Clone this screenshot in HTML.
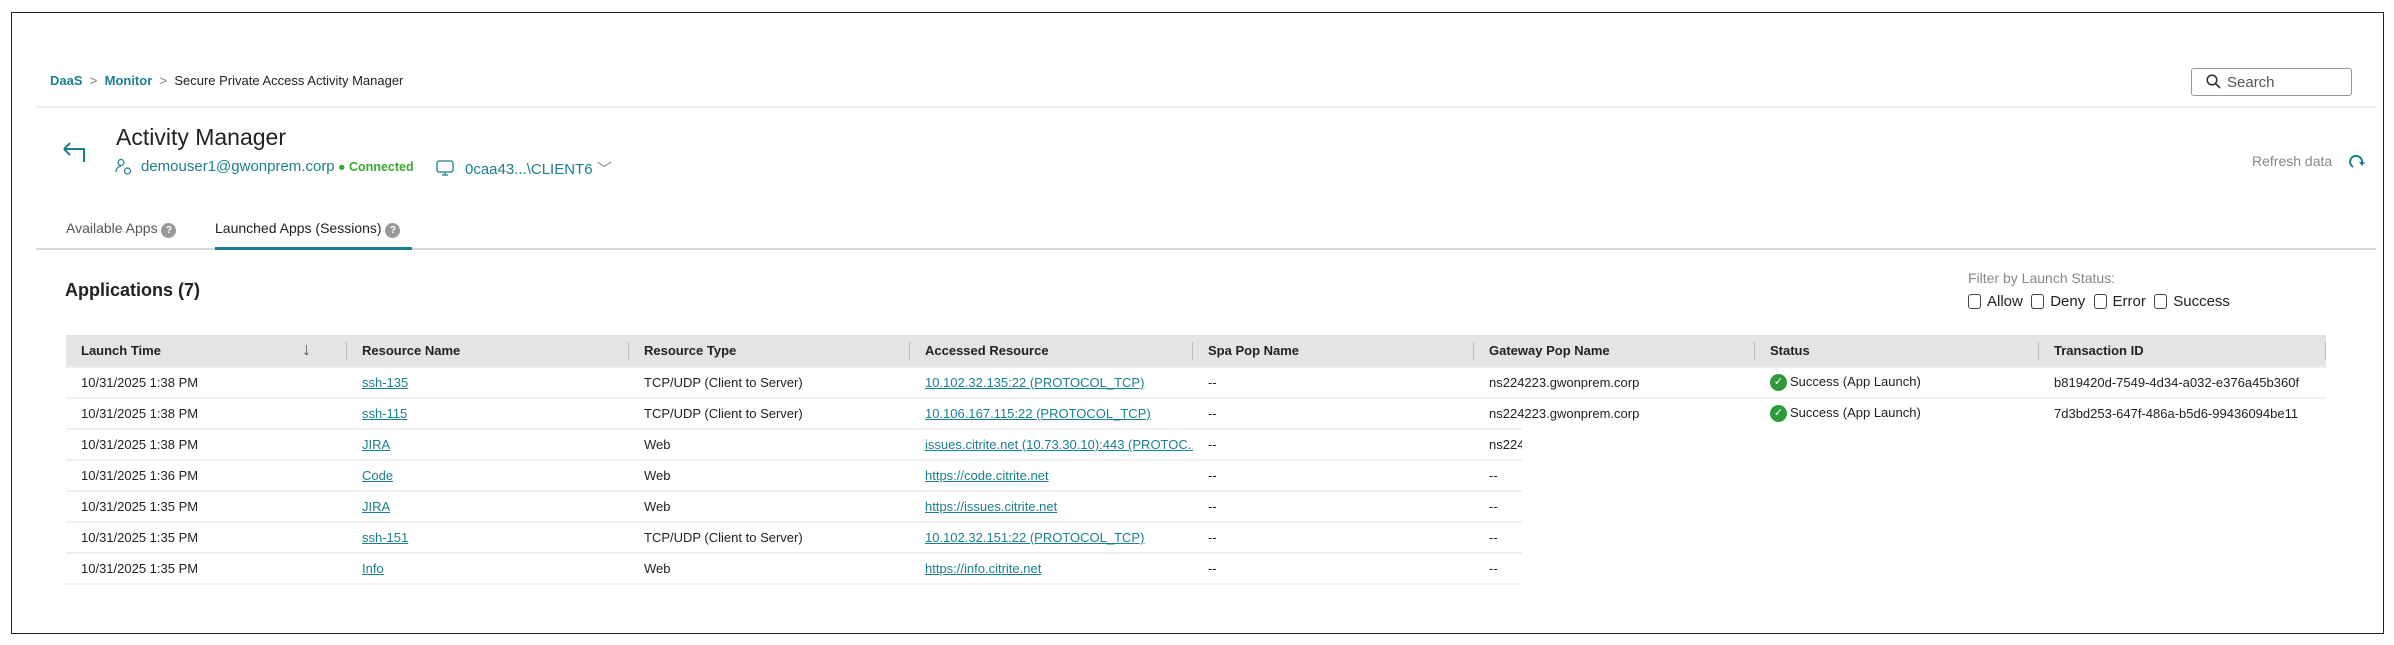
<!DOCTYPE html>
<html><head><meta charset="utf-8"><style>
*{margin:0;padding:0;box-sizing:border-box}
body{width:2394px;height:645px;background:#fff;font-family:"Liberation Sans",sans-serif;color:#222;position:relative;overflow:hidden}
.a{position:absolute;white-space:nowrap}
.frame{position:absolute;left:11px;top:12px;width:2373px;height:622px;border:1.5px solid #222}
.teal{color:#1a7f8e}
.hr{position:absolute;height:2px;background:#e6e6e6}
table{position:absolute;left:66px;top:335px;border-collapse:collapse;font-size:13px;table-layout:fixed;width:2260px}
td,th{height:31px;padding:0 0 0 15px;text-align:left;white-space:nowrap;overflow:hidden;border-bottom:2px solid #f0f0f0;vertical-align:middle}
th{height:32px;background:#e4e4e4;font-weight:bold;position:relative}
th .s{position:absolute;right:0;top:7px;width:1px;height:18px;background:#bbb}
td a{color:#1a7f8e;text-decoration:underline}
.ok{display:inline-block;width:17px;height:17px;border-radius:50%;background:#2e9a3a;color:#fff;font-size:11px;text-align:center;line-height:17px;vertical-align:middle;margin-right:3px}
.cb{display:inline-block;width:13px;height:15px;border:1.5px solid #444;border-radius:3px;vertical-align:-3px;margin-right:6px}
</style></head><body>
<div class="frame"></div>
<div class="hr" style="left:36px;top:106px;width:2340px;background:#ececec"></div>
<div class="a" style="left:50px;top:73px;font-size:13px"><span class="teal" style="font-weight:bold">DaaS</span> <span style="color:#777">&nbsp;&gt;&nbsp;</span> <span class="teal" style="font-weight:bold">Monitor</span> <span style="color:#777">&nbsp;&gt;&nbsp;</span> Secure Private Access Activity Manager</div>
<div class="a" style="left:2191px;top:68px;width:161px;height:28px;border:1.5px solid #999;border-radius:3px;font-size:15px;color:#555;padding:5px 0 0 14px"><svg width="15" height="15" viewBox="0 0 15 15" style="vertical-align:-2px;margin-right:6px"><circle cx="6" cy="6" r="4.8" fill="none" stroke="#333" stroke-width="1.6"/><path d="M9.5 9.5L14 14" stroke="#333" stroke-width="1.6"/></svg>Search</div>
<svg class="a" style="left:62px;top:142px" width="28" height="22" viewBox="0 0 28 22"><path d="M2 7H22V20M2 7L8 1M2 7L8 13" fill="none" stroke="#1a7f8e" stroke-width="2"/></svg>
<div class="a" style="left:116px;top:124px;font-size:23px;color:#222">Activity Manager</div>
<svg class="a" style="left:115px;top:158px" width="18" height="18" viewBox="0 0 18 18"><circle cx="6" cy="4.5" r="3" fill="none" stroke="#1a7f8e" stroke-width="1.2"/><path d="M1 14c0-4 3-6 5-6" fill="none" stroke="#1a7f8e" stroke-width="1.2"/><circle cx="12.5" cy="13" r="3" fill="none" stroke="#1a7f8e" stroke-width="1.2"/></svg>
<div class="a teal" style="left:141px;top:158px;font-size:15px">demouser1@gwonprem.corp</div>
<div class="a" style="left:338px;top:160px;font-size:12.5px;color:#3aa830;font-weight:bold">● Connected</div>
<svg class="a" style="left:436px;top:160px" width="18" height="17" viewBox="0 0 18 17"><rect x="1" y="1" width="16" height="11" rx="2" fill="none" stroke="#1a7f8e" stroke-width="1.3"/><path d="M6 15h6M9 12v3" stroke="#1a7f8e" stroke-width="1.3"/></svg>
<div class="a teal" style="left:465px;top:158px;font-size:15px">0caa43...\CLIENT6 <span style="color:#888">﹀</span></div>
<div class="a" style="left:2252px;top:153px;font-size:14px;color:#888">Refresh data</div>
<svg class="a" style="left:2347px;top:152px" width="20" height="20" viewBox="0 0 20 20"><path d="M6 15A6 6 0 1 1 15 11" fill="none" stroke="#1a7f8e" stroke-width="2"/><path d="M12 10h6l-3 4z" fill="#1a7f8e"/></svg>
<div class="a" style="left:66px;top:220px;font-size:14px;color:#555">Available Apps <span style="display:inline-block;width:15px;height:15px;border-radius:50%;background:#999;color:#fff;font-size:10px;text-align:center;line-height:15px;font-weight:bold">?</span></div>
<div class="a" style="left:215px;top:220px;font-size:14px;color:#222">Launched Apps (Sessions) <span style="display:inline-block;width:15px;height:15px;border-radius:50%;background:#999;color:#fff;font-size:10px;text-align:center;line-height:15px;font-weight:bold">?</span></div>
<div class="hr" style="left:36px;top:248px;width:2340px;background:#d8d8d8"></div>
<div class="a" style="left:215px;top:247px;width:197px;height:3px;background:#1a7f8e"></div>
<div class="a" style="left:65px;top:280px;font-size:18px;font-weight:bold">Applications (7)</div>
<div class="a" style="left:1968px;top:270px;font-size:14px;color:#888">Filter by Launch Status:</div>
<div class="a" style="left:1968px;top:293px;font-size:15px;color:#222"><span class="cb"></span>Allow &nbsp;<span class="cb"></span>Deny &nbsp;<span class="cb"></span>Error &nbsp;<span class="cb"></span>Success</div>
<table>
<colgroup><col style="width:281px"><col style="width:282px"><col style="width:281px"><col style="width:283px"><col style="width:281px"><col style="width:281px"><col style="width:284px"><col style="width:287px"></colgroup>
<tr><th>Launch Time<span style="position:absolute;left:236px;top:4px;font-weight:normal;font-size:18px;color:#555">↓</span><span class="s"></span></th><th>Resource Name<span class="s"></span></th><th>Resource Type<span class="s"></span></th><th>Accessed Resource<span class="s"></span></th><th>Spa Pop Name<span class="s"></span></th><th>Gateway Pop Name<span class="s"></span></th><th>Status<span class="s"></span></th><th>Transaction ID<span class="s"></span></th></tr>
<tr><td>10/31/2025 1:38 PM</td><td><a>ssh-135</a></td><td>TCP/UDP (Client to Server)</td><td><a>10.102.32.135:22 (PROTOCOL_TCP)</a></td><td>--</td><td>ns224223.gwonprem.corp</td><td><span class="ok">✓</span>Success (App Launch)</td><td>b819420d-7549-4d34-a032-e376a45b360f</td></tr>
<tr><td>10/31/2025 1:38 PM</td><td><a>ssh-115</a></td><td>TCP/UDP (Client to Server)</td><td><a>10.106.167.115:22 (PROTOCOL_TCP)</a></td><td>--</td><td>ns224223.gwonprem.corp</td><td><span class="ok">✓</span>Success (App Launch)</td><td>7d3bd253-647f-486a-b5d6-99436094be11</td></tr>
<tr><td>10/31/2025 1:38 PM</td><td><a>JIRA</a></td><td>Web</td><td><a>issues.citrite.net (10.73.30.10):443 (PROTOC...</a></td><td>--</td><td>ns224223.gwonprem.corp</td><td></td><td></td></tr>
<tr><td>10/31/2025 1:36 PM</td><td><a>Code</a></td><td>Web</td><td><a>https://code.citrite.net</a></td><td>--</td><td>--</td><td></td><td></td></tr>
<tr><td>10/31/2025 1:35 PM</td><td><a>JIRA</a></td><td>Web</td><td><a>https://issues.citrite.net</a></td><td>--</td><td>--</td><td></td><td></td></tr>
<tr><td>10/31/2025 1:35 PM</td><td><a>ssh-151</a></td><td>TCP/UDP (Client to Server)</td><td><a>10.102.32.151:22 (PROTOCOL_TCP)</a></td><td>--</td><td>--</td><td></td><td></td></tr>
<tr><td>10/31/2025 1:35 PM</td><td><a>Info</a></td><td>Web</td><td><a>https://info.citrite.net</a></td><td>--</td><td>--</td><td></td><td></td></tr>
</table>
<div class="a" style="left:1522px;top:426px;width:840px;height:190px;background:#fff"></div>
</body></html>
